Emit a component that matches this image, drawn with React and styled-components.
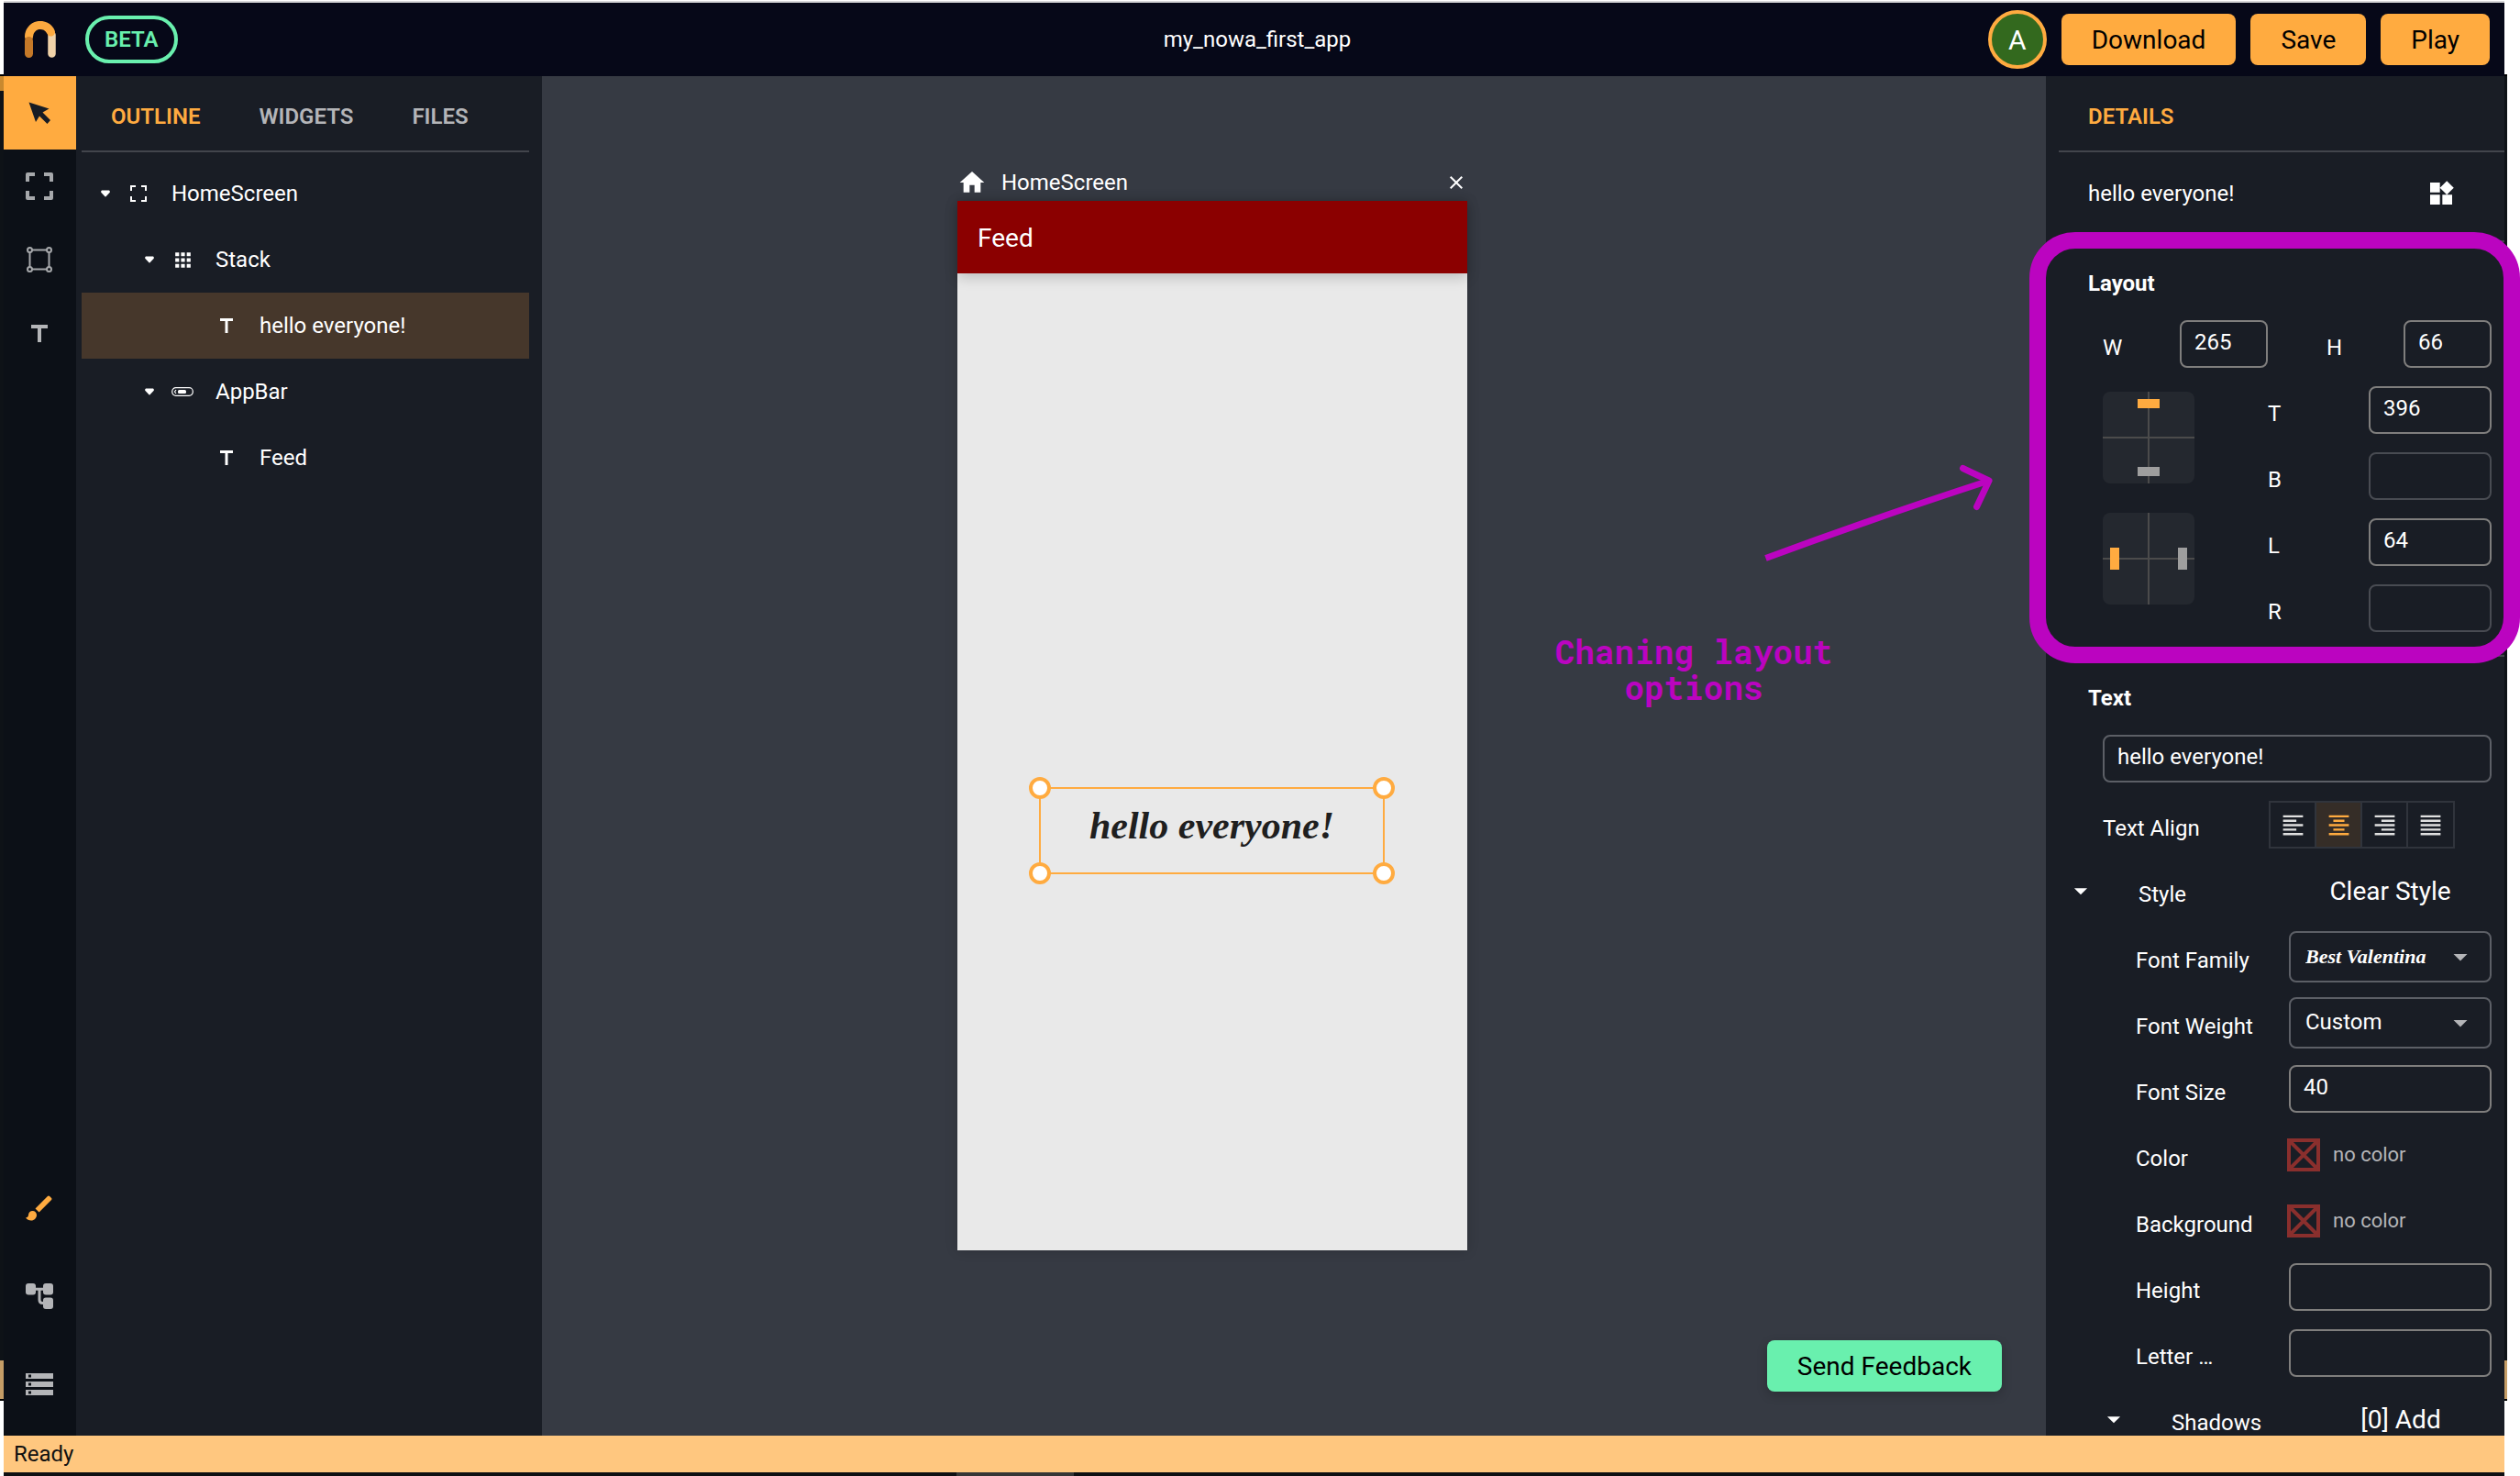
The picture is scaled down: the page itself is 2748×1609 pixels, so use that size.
import React, { useState } from "react";
import styled, { createGlobalStyle, css } from "styled-components";
import {
  MdArrowDropDown,
  MdApps,
  MdBrush,
  MdClose,
  MdFormatAlignCenter,
  MdFormatAlignJustify,
  MdFormatAlignLeft,
  MdFormatAlignRight,
  MdHome,
  MdStorage,
  MdWidgets,
} from "react-icons/md";

const c = {
  header: "#060818",
  rail: "#0c1017",
  panel: "#191d25",
  canvas: "#363a43",
  accent: "#ffab40",
  mint: "#69f0ae",
  note: "#bb04c0",
  divider: "#42454c",
  muted: "#b4b5b8",
};

const script = `"Best Valentina", "Liberation Serif", cursive`;

const GlobalStyle = createGlobalStyle`
  *, *::before, *::after { box-sizing: border-box; }
  body { margin: 0; background: #fff; overflow: hidden; }
  body, button, input, select { font-family: Roboto, "Liberation Sans", sans-serif; }
  button { border: 0; padding: 0; background: none; color: inherit; cursor: pointer; }
  ul { list-style: none; margin: 0; padding: 0; }
  h1, h2, h3, p { margin: 0; font-weight: inherit; font-size: inherit; }
  svg { display: block; flex: none; }
`;

const Desktop = styled.div`
  position: relative;
  height: 100vh;
  padding: 1px 17px 0 4px;
  font-size: 24px;
  line-height: 28px;
  color: #fff;
`;

const BackWindow = styled.div`
  position: absolute;
  inset: 81px 14px 82px 0;
  display: flex;
  flex-direction: column;
  border: solid #000;
  border-width: 2px 0;
  background: #0e1217;
`;

const BackTitle = styled.div`
  width: 50%;
  height: 16px;
  background: #c8892f;
`;

const BackStatus = styled.div`
  height: 42px;
  margin-top: auto;
  background: #c59d66;
`;

const Window = styled.div`
  position: relative;
  height: 100%;
  display: flex;
  flex-direction: column;
  border-top: 2px solid #d6d6d8;
`;

const Header = styled.header`
  height: 80px;
  flex: none;
  display: flex;
  align-items: center;
  padding: 0 16px 0 23px;
  background: ${c.header};
`;

const HeaderSide = styled.div`
  flex: 1;
  display: flex;
  align-items: center;
  gap: ${(p) => (p.$end ? "16px" : "32px")};
  justify-content: ${(p) => (p.$end ? "flex-end" : "flex-start")};
`;

const Beta = styled.span`
  height: 52px;
  padding: 0 17px;
  display: flex;
  align-items: center;
  border: 4px solid ${c.mint};
  border-radius: 26px;
  color: ${c.mint};
  font-weight: 600;
`;

const Avatar = styled.button`
  width: 64px;
  height: 64px;
  border: 4px solid ${c.accent};
  border-radius: 50%;
  background: #33691e;
  font-size: 30px;
`;

const ActionButton = styled.button`
  height: 56px;
  padding: 0 33px;
  border-radius: 8px;
  background: ${(p) => (p.$mint ? c.mint : c.accent)};
  color: #000;
  font-size: 28px;
  ${(p) => p.$mint && css`box-shadow: 0 4px 12px rgba(0, 0, 0, 0.2);`}
`;

const Workspace = styled.div`
  flex: 1;
  min-height: 0;
  display: flex;
`;

const Rail = styled.nav`
  width: 79px;
  flex: none;
  display: flex;
  flex-direction: column;
  justify-content: space-between;
  padding-bottom: 8px;
  background: ${c.rail};
`;

const Tool = styled.button`
  width: 79px;
  height: ${(p) => (p.$tall ? "96px" : "80px")};
  padding-right: 1px;
  display: grid;
  place-items: center;
  color: ${(p) => (p.$tint ? c.accent : c.muted)};
  background: ${(p) => (p.$active ? c.accent : "transparent")};
`;

const Outline = styled.aside`
  width: 508px;
  flex: none;
  padding: 0 14px 0 6px;
  background: ${c.panel};
`;

const Tabs = styled.div`
  height: 83px;
  display: flex;
  align-items: center;
  padding-top: 6px;
  border-bottom: 2px solid ${c.divider};
`;

const Tab = styled.button`
  padding: 0 32px;
  font-size: 24px;
  line-height: 28px;
  font-weight: 600;
  color: ${(p) => (p.$active ? c.accent : c.muted)};
`;

const Tree = styled.ul`
  padding-top: 9px;
`;

const TreeRow = styled.button`
  width: 100%;
  height: 72px;
  display: flex;
  align-items: center;
  padding-left: ${(p) => 14 + p.$depth * 48}px;
  font-size: 24px;
  line-height: 28px;
  background: ${(p) => (p.$selected ? "#46372b" : "transparent")};
`;

const TreeSlot = styled.span`
  width: ${(p) => (p.$wide ? "48px" : "24px")};
  display: grid;
  place-items: center;
`;

const TreeLabel = styled.span`
  padding-left: 12px;
`;

const Canvas = styled.main`
  flex: 1;
  position: relative;
  background: ${c.canvas};
`;

const Artboard = styled.section`
  position: absolute;
  left: 453px;
  top: 100px;
  width: 556px;
`;

const ArtboardBar = styled.div`
  height: 36px;
  display: flex;
  align-items: center;
  gap: 16px;
  padding: 0 0 4px;
`;

const CloseButton = styled.button`
  margin-left: auto;
`;

const Phone = styled.div`
  position: relative;
  height: 1144px;
  background: #e9e9e9;
  box-shadow: 0 0 12px rgba(0, 0, 0, 0.18);
`;

const AppBar = styled.div`
  height: 79px;
  display: flex;
  align-items: center;
  padding: 2px 0 0 22px;
  background: #8b0000;
  box-shadow: 0 4px 14px rgba(0, 0, 0, 0.2);
  font-size: 28px;
`;

const Selection = styled.div`
  position: absolute;
  left: 89px;
  top: 639px;
  width: 377px;
  height: 95px;
  display: flex;
  justify-content: center;
  align-items: flex-start;
  border: 2px solid ${c.accent};
  color: #1f1f1f;
  font: italic bold 42px/80px ${script};
`;

const Handle = styled.span`
  position: absolute;
  width: 24px;
  height: 24px;
  border: 4px solid ${c.accent};
  border-radius: 50%;
  background: #fff;
  ${(p) => p.$y}: -13px;
  ${(p) => p.$x}: -13px;
`;

const NoteText = styled.p`
  position: absolute;
  left: 1102px;
  top: 608px;
  width: 308px;
  color: ${c.note};
  font: bold 36px/39px "Roboto Mono", "DejaVu Sans Mono", monospace;
  text-align: center;
`;

const NoteArrow = styled.svg`
  position: absolute;
  left: 1329px;
  top: 417px;
`;

const FeedbackSlot = styled.div`
  position: absolute;
  right: 48px;
  bottom: 48px;
`;

const Details = styled.aside`
  width: 500px;
  flex: none;
  overflow-x: visible;
  overflow-y: clip;
  background: ${c.panel};
`;

const DetailsTabs = styled(Tabs)`
  margin-left: 14px;
`;

const Element = styled.div`
  height: 96px;
  display: flex;
  align-items: center;
  justify-content: space-between;
  padding: 0 53px 6px 46px;
`;

const Section = styled.section`
  position: relative;
`;

const Divider = styled.hr`
  height: 2px;
  margin: 0 0 0 14px;
  border: 0;
  background: ${c.divider};
`;

const SectionTitle = styled.h2`
  height: 75px;
  display: flex;
  align-items: center;
  padding: 14px 0 0 46px;
  font-weight: 700;
`;

const Highlight = styled.div`
  position: absolute;
  z-index: 2;
  inset: -11px -17px -9px -18px;
  border: 18px solid ${c.note};
  border-radius: 50px;
  pointer-events: none;
`;

const Row = styled.div`
  height: 72px;
  display: flex;
  align-items: center;
  justify-content: space-between;
  padding-right: ${(p) => (p.$bare ? "0" : "14px")};
  padding-left: ${(p) => p.$indent || 0}px;
`;

const SizeRow = styled.div`
  display: grid;
  grid-template-columns: 1fr 1fr;
  gap: 64px;
  padding: 0 14px 0 62px;
`;

const Pins = styled.div`
  display: grid;
  grid-template-columns: 100px 1fr;
  gap: 80px;
  padding: 0 14px 15px 62px;
`;

const PinBoxes = styled.div`
  display: flex;
  flex-direction: column;
  gap: 32px;
  padding-top: 16px;
`;

const Label = styled.label`
  padding-top: 8px;
`;

const Caption = styled.span`
  padding-top: 8px;
`;

const Field = styled.input`
  width: ${(p) => p.$w || "221px"};
  height: 52px;
  padding: 0 14px 4px;
  border: 2px solid ${(p) => (p.$tone === "off" ? "#484b52" : p.$tone === "soft" ? "#5c5f66" : "#7f7e7d")};
  border-radius: 8px;
  background: transparent;
  color: #fff;
  font-size: 24px;
  outline: 0;
`;

const SelectBox = styled.div`
  position: relative;
  width: 221px;
`;

const Select = styled.select`
  width: 100%;
  height: 56px;
  padding: 0 48px 2px 16px;
  appearance: none;
  border: 2px solid #5c5f66;
  border-radius: 8px;
  background: transparent;
  color: #fff;
  font-size: 24px;
  ${(p) => p.$script && css`font: italic bold 22px ${script};`}
`;

const SelectArrow = styled(MdArrowDropDown)`
  position: absolute;
  right: 16px;
  top: 10px;
  color: ${c.muted};
  pointer-events: none;
`;

const Control = styled.div`
  width: ${(p) => p.$w || "223px"};
  display: flex;
  align-items: center;
  justify-content: ${(p) => (p.$center ? "center" : "flex-start")};
`;

const TextAction = styled.button`
  padding-top: 2px;
  font-size: 28px;
  line-height: 32px;
`;

const Segments = styled.div`
  display: flex;
  border: 2px solid #30343c;
`;

const Segment = styled.button`
  width: ${(p) => (p.$last ? "49px" : "50px")};
  height: 48px;
  display: grid;
  place-items: center;
  color: ${(p) => (p.$on ? c.accent : "#e0e0e0")};
  background: ${(p) => (p.$on ? "#352d27" : "transparent")};
  border-right: ${(p) => (p.$last ? "0" : "2px solid #30343c")};
`;

const Swatch = styled.button`
  display: flex;
  align-items: center;
  gap: 14px;
  color: ${c.muted};
  font-size: 22px;
  line-height: 28px;
`;

const Toggle = styled.button`
  width: 34px;
  margin-right: 46px;
`;

const Lead = styled.div`
  display: flex;
  align-items: center;
`;

const StatusBar = styled.footer`
  height: 40px;
  flex: none;
  padding: 0 11px;
  background: #ffc77f;
  color: #111;
  line-height: 40px;
`;

const Dock = styled.div`
  height: 4px;
  flex: none;
  padding-left: 1039px;
  background: #0f1013;
`;

const DockItem = styled.div`
  width: 128px;
  height: 4px;
  background: #363636;
`;

const Logo = () => (
  <svg width="34" height="40" viewBox="0 0 34 40" fill="none" strokeLinecap="round">
    <path d="M29.500 15V35.500" stroke="#f0d2a8" strokeWidth="8.5" />
    <path d="M4.500 17A12.500 12.500 0 0 1 28.500 12" stroke="#fca93f" strokeWidth="9" />
    <path d="M4.500 21.500V35.500" stroke="#c57928" strokeWidth="9" />
  </svg>
);

const Cursor = () => (
  <svg width="24" height="24" viewBox="0 0 24 24" fill="#171c24">
    <path d="M.5.500 22.500 7.500 15.500 11.500 24 20 20.500 24 12 15.500 8 22Z" />
  </svg>
);

const Frame = () => (
  <svg width="30" height="30" viewBox="0 0 30 30" fill="none" stroke="#a6a8ab" strokeWidth="4" strokeLinejoin="round">
    <path d="M2 10V2H10M20 2H28V10M28 20V28H20M10 28H2V20" />
  </svg>
);

const SmallFrame = () => (
  <svg width="18" height="18" viewBox="0 0 18 18" fill="none" stroke="currentColor" strokeWidth="2">
    <path d="M1 6V1H6M12 1H17V6M17 12V17H12M6 17H1V12" />
  </svg>
);

const Box = () => (
  <svg width="30" height="30" viewBox="0 0 30 30" fill="none" stroke="#a6a8ab" strokeWidth="2">
    <path d="M7 4.500H23M7 25.500H23M4.500 7V23M25.500 7V23" />
    <circle cx="4.500" cy="4.500" r="2.500" />
    <circle cx="25.500" cy="4.500" r="2.500" />
    <circle cx="4.500" cy="25.500" r="2.500" />
    <circle cx="25.500" cy="25.500" r="2.500" />
  </svg>
);

const Glyph = ({ w, h, t }) => (
  <svg width={w} height={h} viewBox={`0 0 ${w} ${h}`} fill="none" stroke="currentColor" strokeWidth={t}>
    <path d={`M0 ${t / 2}H${w}M${w / 2} 0V${h}`} />
  </svg>
);

const Caret = () => (
  <svg width="10" height="8" viewBox="0 0 10 8" fill="currentColor">
    <path d="M1 .5H9Q10.500 1.500 9.500 3L5.500 7.300Q5 7.700 4.500 7.300L.5 3Q-.5 1.500 1 .5Z" />
  </svg>
);

const Pill = () => (
  <svg width="24" height="10" viewBox="0 0 24 10" fill="none" stroke="currentColor">
    <rect x=".7" y=".7" width="22.600" height="8.600" rx="4" strokeWidth="1.200" />
    <rect x="7" y="3" width="9" height="4" rx="1.500" fill="currentColor" stroke="none" />
    <path d="M5 3 3.500 5 5 7" strokeWidth="1.200" />
  </svg>
);

const Flow = () => (
  <svg width="30" height="28" viewBox="0 0 30 28" fill="currentColor">
    <rect width="11" height="12.500" rx="3" />
    <rect x="19" width="11" height="12.500" rx="3" />
    <rect x="19" y="15.500" width="11" height="12.500" rx="3" />
    <path d="M10 6.200H20M15 6.200V18Q15 21.500 18.500 21.500H20" fill="none" stroke="currentColor" strokeWidth="3" />
  </svg>
);

const NoColor = () => (
  <svg width="36" height="36" viewBox="0 0 36 36" fill="none" stroke="#8a2f2d">
    <rect x="2" y="2" width="32" height="32" strokeWidth="4" />
    <path d="M3 3 33 33M33 3 3 33" strokeWidth="4" />
  </svg>
);

const PinBox = ({ vertical }) => (
  <svg width="100" height="100" viewBox="0 0 100 100">
    <rect width="100" height="100" rx="8" fill="#24282f" />
    <path d="M0 50H100M50 0V100" stroke="#4b4b4b" strokeWidth="2" />
    <g transform={vertical ? undefined : "rotate(-90 50 50)"}>
      <rect x="38" y="8" width="24" height="10" fill="#ffab40" />
      <rect x="38" y="82" width="24" height="10" fill="#9e9e9e" />
    </g>
  </svg>
);

const tree = [
  { label: "HomeScreen", depth: 0, icon: <SmallFrame />, open: true },
  { label: "Stack", depth: 1, icon: <MdApps size={25} />, open: true },
  { label: "hello everyone!", depth: 2, icon: <Glyph w={14} h={16} t={3} />, selected: true },
  { label: "AppBar", depth: 1, icon: <Pill />, open: true },
  { label: "Feed", depth: 2, icon: <Glyph w={14} h={16} t={3} /> },
];

const pins = [
  ["T", "396"],
  ["B", ""],
  ["L", "64"],
  ["R", ""],
];

const aligns = [
  ["Left", MdFormatAlignLeft],
  ["Center", MdFormatAlignCenter],
  ["Right", MdFormatAlignRight],
  ["Justify", MdFormatAlignJustify],
];

export default function App() {
  const [align, setAlign] = useState("Center");
  return (
    <Desktop>
      <GlobalStyle />
      <BackWindow>
        <BackTitle />
        <BackStatus />
      </BackWindow>
      <Window>
        <Header>
          <HeaderSide>
            <Logo />
            <Beta>BETA</Beta>
          </HeaderSide>
          <h1>my_nowa_first_app</h1>
          <HeaderSide $end>
            <Avatar>A</Avatar>
            <ActionButton>Download</ActionButton>
            <ActionButton>Save</ActionButton>
            <ActionButton>Play</ActionButton>
          </HeaderSide>
        </Header>
        <Workspace>
          <Rail>
            <div>
              <Tool $active aria-label="Select"><Cursor /></Tool>
              <Tool aria-label="Screen"><Frame /></Tool>
              <Tool aria-label="Box"><Box /></Tool>
              <Tool aria-label="Text"><Glyph w={18} h={19} t={4} /></Tool>
            </div>
            <div>
              <Tool $tall $tint aria-label="Design"><MdBrush size={36} /></Tool>
              <Tool $tall aria-label="Logic"><Flow /></Tool>
              <Tool $tall aria-label="Data"><MdStorage size={36} /></Tool>
            </div>
          </Rail>
          <Outline>
            <Tabs>
              <Tab $active>OUTLINE</Tab>
              <Tab>WIDGETS</Tab>
              <Tab>FILES</Tab>
            </Tabs>
            <Tree>
              {tree.map((n) => (
                <li key={n.label}>
                  <TreeRow $depth={n.depth} $selected={n.selected}>
                    <TreeSlot>{n.open && <Caret />}</TreeSlot>
                    <TreeSlot $wide>{n.icon}</TreeSlot>
                    <TreeLabel>{n.label}</TreeLabel>
                  </TreeRow>
                </li>
              ))}
            </Tree>
          </Outline>
          <Canvas>
            <Artboard>
              <ArtboardBar>
                <MdHome size={32} />
                <h2>HomeScreen</h2>
                <CloseButton aria-label="Close"><MdClose size={24} /></CloseButton>
              </ArtboardBar>
              <Phone>
                <AppBar>Feed</AppBar>
                <Selection>
                  hello everyone!
                  <Handle $x="left" $y="top" />
                  <Handle $x="right" $y="top" />
                  <Handle $x="left" $y="bottom" />
                  <Handle $x="right" $y="bottom" />
                </Selection>
              </Phone>
            </Artboard>
            <NoteArrow width="260" height="120" viewBox="0 0 260 120" fill="none" stroke={c.note} strokeWidth="7" strokeLinejoin="round">
              <path d="M5.500 108.500Q120 66 249 24" />
              <path d="M220.500 10.500 249 24 235.500 52.500" strokeLinecap="round" />
            </NoteArrow>
            <NoteText>Chaning layout options</NoteText>
            <FeedbackSlot>
              <ActionButton $mint>Send Feedback</ActionButton>
            </FeedbackSlot>
          </Canvas>
          <Details>
            <DetailsTabs>
              <Tab $active>DETAILS</Tab>
            </DetailsTabs>
            <Element>
              <h2>hello everyone!</h2>
              <MdWidgets size={32} />
            </Element>
            <Divider />
            <Section>
              <Highlight />
              <SectionTitle>Layout</SectionTitle>
              <SizeRow>
                <Row $bare>
                  <Label htmlFor="w">W</Label>
                  <Field id="w" $w="96px" defaultValue="265" />
                </Row>
                <Row $bare>
                  <Label htmlFor="h">H</Label>
                  <Field id="h" $w="96px" defaultValue="66" />
                </Row>
              </SizeRow>
              <Pins>
                <PinBoxes>
                  <PinBox vertical />
                  <PinBox />
                </PinBoxes>
                <div>
                  {pins.map(([name, value]) => (
                    <Row $bare key={name}>
                      <Label htmlFor={name}>{name}</Label>
                      <Field id={name} $w="134px" $tone={value ? "" : "off"} defaultValue={value} disabled={!value} />
                    </Row>
                  ))}
                </div>
              </Pins>
            </Section>
            <Divider />
            <Section>
              <SectionTitle>Text</SectionTitle>
              <Row $indent={62}>
                <Field $w="100%" $tone="soft" aria-label="Text" defaultValue="hello everyone!" />
              </Row>
              <Row $indent={62}>
                <Caption>Text Align</Caption>
                <Control $w="243px">
                  <Segments>
                    {aligns.map(([name, Icon], i) => (
                      <Segment key={name} aria-label={name} $on={align === name} $last={i === 3} onClick={() => setAlign(name)}>
                        <Icon size={29} />
                      </Segment>
                    ))}
                  </Segments>
                </Control>
              </Row>
              <Row $indent={21}>
                <Lead>
                  <Toggle aria-label="Collapse style"><MdArrowDropDown size={34} /></Toggle>
                  <Caption>Style</Caption>
                </Lead>
                <Control $w="221px" $center><TextAction>Clear Style</TextAction></Control>
              </Row>
              <Row $indent={98}>
                <Label htmlFor="family">Font Family</Label>
                <SelectBox>
                  <Select id="family" $script><option>Best Valentina</option></Select>
                  <SelectArrow size={36} />
                </SelectBox>
              </Row>
              <Row $indent={98}>
                <Label htmlFor="weight">Font Weight</Label>
                <SelectBox>
                  <Select id="weight"><option>Custom</option></Select>
                  <SelectArrow size={36} />
                </SelectBox>
              </Row>
              <Row $indent={98}>
                <Label htmlFor="size">Font Size</Label>
                <Field id="size" defaultValue="40" />
              </Row>
              <Row $indent={98}>
                <Caption>Color</Caption>
                <Control><Swatch><NoColor />no color</Swatch></Control>
              </Row>
              <Row $indent={98}>
                <Caption>Background</Caption>
                <Control><Swatch><NoColor />no color</Swatch></Control>
              </Row>
              <Row $indent={98}>
                <Label htmlFor="height">Height</Label>
                <Field id="height" />
              </Row>
              <Row $indent={98}>
                <Label htmlFor="letter">Letter …</Label>
                <Field id="letter" />
              </Row>
              <Row $indent={57}>
                <Lead>
                  <Toggle aria-label="Collapse shadows"><MdArrowDropDown size={34} /></Toggle>
                  <Caption>Shadows</Caption>
                </Lead>
                <Control $w="198px" $center><TextAction>[0] Add</TextAction></Control>
              </Row>
            </Section>
          </Details>
        </Workspace>
        <StatusBar>Ready</StatusBar>
        <Dock><DockItem /></Dock>
      </Window>
    </Desktop>
  );
}
